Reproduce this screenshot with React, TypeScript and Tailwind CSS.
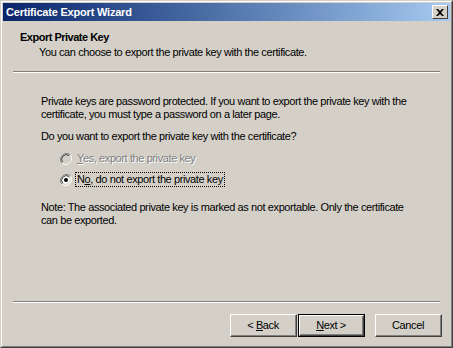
import React from 'react';

const font = { fontFamily: '"Liberation Sans", Arial, sans-serif' };

function Radio({ checked, disabled }: { checked?: boolean; disabled?: boolean }) {
  return (
    <svg width="12" height="12" viewBox="0 0 12 12" className="shrink-0">
      {/* outer sunken ring */}
      <path d="M10.2 1.8 A6 6 0 0 0 1.8 10.2" fill="none" stroke="#808080" strokeWidth="1" />
      <path d="M1.8 10.2 A6 6 0 0 0 10.2 1.8" fill="none" stroke="#ffffff" strokeWidth="1" />
      <circle cx="6" cy="6" r="4.6" fill={disabled ? '#d4d0c8' : '#ffffff'} />
      <path d="M9.3 2.7 A4.7 4.7 0 0 0 2.7 9.3" fill="none" stroke="#404040" strokeWidth="1" />
      <path d="M2.7 9.3 A4.7 4.7 0 0 0 9.3 2.7" fill="none" stroke="#d4d0c8" strokeWidth="1" />
      {checked && <circle cx="6" cy="6" r="2" fill="#000000" />}
    </svg>
  );
}

function Button({ children, isDefault }: { children: React.ReactNode; isDefault?: boolean }) {
  return (
    <div className={`h-[23px] ${isDefault ? 'border border-black' : ''}`}>
      <div className="h-full border-t border-l border-t-white border-l-white border-r border-b border-r-[#404040] border-b-[#404040]">
        <div className="h-full flex items-center justify-center border-r border-b border-r-[#808080] border-b-[#808080] text-[11px] tracking-[-0.4px] text-black">
          <span>{children}</span>
        </div>
      </div>
    </div>
  );
}

export default function App() {
  return (
    <div className="w-[453px] h-[348px] bg-[#d4d0c8]" style={font}>
      {/* window frame */}
      <div className="w-full h-full border-t border-l border-t-[#d4d0c8] border-l-[#d4d0c8] border-r border-b border-r-[#404040] border-b-[#404040]">
        <div className="w-full h-full border-t border-l border-t-white border-l-white border-r border-b border-r-[#808080] border-b-[#808080] p-px flex flex-col">
          {/* title bar */}
          <div className="h-[18px] flex items-center justify-between bg-gradient-to-r from-[#0a246a] to-[#a6caf0] pl-[3px] pr-[2px]">
            <span className="text-[11px] tracking-[-0.2px] font-bold text-white leading-none">Certificate Export Wizard</span>
            <div className="w-[16px] h-[14px] bg-[#d4d0c8] border-t border-l border-t-white border-l-white border-r border-b border-r-[#404040] border-b-[#404040] flex items-center justify-center">
              <svg width="8" height="7" viewBox="0 0 8 7">
                <path d="M0 0 L2 0 L4 2 L6 0 L8 0 L5 3.5 L8 7 L6 7 L4 5 L2 7 L0 7 L3 3.5 Z" fill="#000" />
              </svg>
            </div>
          </div>

          {/* header */}
          <div className="pt-[10px] pl-[17px] text-[11px] leading-[13px] tracking-[-0.4px] text-black">
            <div className="font-bold tracking-[-0.5px]">Export Private Key</div>
            <div className="pl-[19px] mt-[2px]">You can choose to export the private key with the certificate.</div>
          </div>
          <div className="mt-[12px] mx-[10px] h-[2px] border-t border-t-[#808080] border-b border-b-white" />

          {/* body */}
          <div className="pl-[38px] pr-[37px] pt-[22px] text-[11px] leading-[13px] tracking-[-0.4px] text-black">
            <p>
              Private keys are password protected. If you want to export the private key with the
              certificate, you must type a password on a later page.
            </p>
            <p className="mt-[9px]">Do you want to export the private key with the certificate?</p>
            <div className="pl-[19px] mt-[9px] flex flex-col gap-[7px]">
              <div className="flex items-center gap-[4px] h-[13px]">
                <Radio disabled />
                <span className="text-[#808080] px-[1px]" style={{ textShadow: '1px 1px 0 #ffffff' }}>
                  <u>Y</u>es, export the private key
                </span>
              </div>
              <div className="flex items-center gap-[3px] h-[15px]">
                <Radio checked />
                <span className="px-[1px] border border-dotted border-black leading-[13px]">
                  N<u>o</u>, do not export the private key
                </span>
              </div>
            </div>
            <p className="mt-[14px]">
              Note: The associated private key is marked as not exportable. Only the certificate
              can be exported.
            </p>
          </div>

          <div className="flex-1" />

          {/* footer */}
          <div className="mx-[10px] h-[2px] border-t border-t-[#808080] border-b border-b-white" />
          <div className="flex justify-end pt-[11px] pb-[8px] pr-[8px]">
            <div className="w-[67px]">
              <Button>
                &lt;&nbsp;<u>B</u>ack
              </Button>
            </div>
            <div className="w-[67px] ml-[1px]">
              <Button isDefault>
                <u>N</u>ext&nbsp;&gt;
              </Button>
            </div>
            <div className="w-[67px] ml-[10px]">
              <Button>Cancel</Button>
            </div>
          </div>
        </div>
      </div>
    </div>
  );
}
